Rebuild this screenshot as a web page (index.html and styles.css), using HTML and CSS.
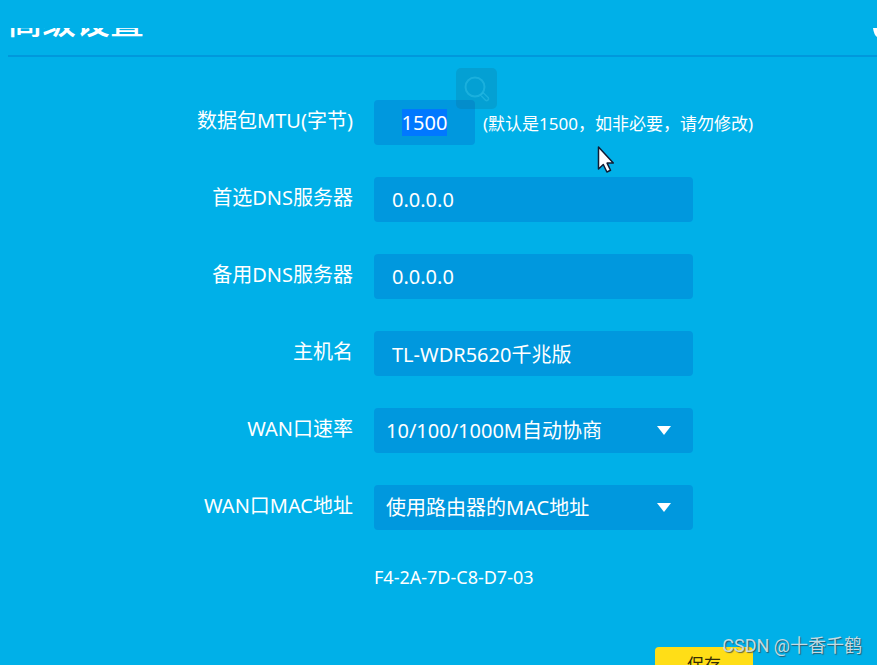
FILE: index.html
```html
<!DOCTYPE html>
<html lang="zh-CN">
<head>
    <meta charset="UTF-8">
    <meta name="viewport" content="width=device-width, initial-scale=1.0">
    <title>高级设置</title>
    <link rel="stylesheet" href="styles.css">
</head>
<body>
    <header class="header">
        <h1>高级设置</h1>
        <svg class="header-icon" width="4" height="11" viewBox="0 0 4 11"><path d="M0 0h4v9Q1 7 0 0z" fill="#fff"/></svg>
    </header>

    <form class="settings">
        <div class="row">
            <label for="mtu">数据包MTU(字节)</label>
            <input class="field short" id="mtu" type="text" value="1500">
            <span class="hint">(默认是1500，如非必要，请勿修改)</span>
        </div>
        <div class="row">
            <label for="dns1">首选DNS服务器</label>
            <input class="field" id="dns1" type="text" value="0.0.0.0">
        </div>
        <div class="row">
            <label for="dns2">备用DNS服务器</label>
            <input class="field" id="dns2" type="text" value="0.0.0.0">
        </div>
        <div class="row">
            <label for="host">主机名</label>
            <input class="field" id="host" type="text" value="TL-WDR5620千兆版">
        </div>
        <div class="row">
            <label for="speed">WAN口速率</label>
            <div class="select">
                <select class="field" id="speed">
                    <option>10/100/1000M自动协商</option>
                </select>
            </div>
        </div>
        <div class="row">
            <label for="mac">WAN口MAC地址</label>
            <div class="select">
                <select class="field" id="mac">
                    <option>使用路由器的MAC地址</option>
                </select>
            </div>
        </div>
        <p class="mac-value">F4-2A-7D-C8-D7-03</p>
        <div class="actions">
            <button type="button">保存</button>
        </div>
    </form>

    <div class="search">
        <svg width="28" height="28" viewBox="0 0 28 28" fill="none" stroke="#20b4e0" stroke-opacity=".8">
            <circle cx="12" cy="12" r="9.5" stroke-width="2"/>
            <path d="M17.500 20l2.500-2.500 5.300 5.200q.8 1.500-.4 2.500t-2.400 0z" stroke-width="1.500" stroke-linejoin="round"/>
        </svg>
    </div>

    <svg class="cursor" width="18" height="28" viewBox="0 0 18 28">
        <path d="M1.500 1v22l4.800-4.500 3.600 7.500 3.600-1.700-3.400-7.200h6.200z" fill="#fff" stroke="#111c33" stroke-width="1.500" stroke-linejoin="round"/>
    </svg>

    <div class="watermark">CSDN @十香千鹤</div>

    <script>
        document.getElementById('mtu').focus({ preventScroll: true });
        document.getElementById('mtu').select();
    </script>
</body>
</html>
```

FILE: styles.css
```css
* { box-sizing: border-box; }
html { height: 100%; overflow: hidden; }
body {
    position: relative;
    height: 100%;
    margin: 0;
    padding: 28px 0 0 8px;
    overflow: hidden;
    background: #00b0e8;
    color: #fff;
    font-family: "Noto Sans", "Noto Sans CJK SC", sans-serif;
    font-size: 20px;
}
.header {
    display: flex;
    justify-content: space-between;
    height: 29px;
    overflow: hidden;
    border-bottom: 2px solid #0098dc;
}
.header h1 {
    margin: -25px 0 0;
    font-size: 34px;
    font-weight: 500;
    line-height: 36px;
}
.settings {
    display: flex;
    flex-direction: column;
    gap: 32px;
    padding-top: 43px;
}
.row {
    display: flex;
    align-items: center;
    height: 45px;
}
.row label {
    width: 345px;
    margin-right: 21px;
    padding-bottom: 4px;
    text-align: right;
    line-height: 28px;
}
.field {
    width: 319px;
    height: 45px;
    padding: 0 18px;
    border: none;
    border-radius: 4px;
    outline: none;
    background: #0098de;
    color: #fff;
    font: inherit;
}
.field.short {
    width: 101px;
    text-align: center;
}
.field::selection {
    background: #0078ff;
    color: #fff;
}
.hint {
    margin-left: 8px;
    font-size: 17px;
}
.select { position: relative; }
.select .field {
    display: block;
    padding: 0 12px;
    appearance: none;
}
.select::after {
    content: "";
    position: absolute;
    top: 18px;
    right: 22px;
    border: 7px solid transparent;
    border-top: 9px solid #fff;
    border-bottom: none;
    pointer-events: none;
}
.mac-value {
    margin: 0 0 0 366px;
    font-size: 18px;
    line-height: 30px;
}
.actions {
    display: flex;
    justify-content: flex-end;
    margin: 23px 124px 0 0;
}
.actions button {
    flex: none;
    width: 98px;
    height: 32px;
    padding: 0;
    border: none;
    border-radius: 4px;
    background: #ffde17;
    color: #332c05;
    font: inherit;
    font-size: 17px;
}
.search {
    position: absolute;
    top: 68px;
    left: 456px;
    display: flex;
    align-items: center;
    justify-content: center;
    width: 41px;
    height: 41px;
    border-radius: 5px;
    background: rgba(20, 100, 130, 0.2);
}
.cursor {
    position: absolute;
    top: 146px;
    left: 597px;
}
.watermark {
    position: absolute;
    right: 15px;
    bottom: 8px;
    color: #c3dbe3;
    font-family: Roboto, "Noto Sans CJK SC", sans-serif;
    font-size: 18px;
    font-weight: 400;
    text-shadow: 1px 1px 1px rgba(50, 70, 80, 0.8);
}
```
